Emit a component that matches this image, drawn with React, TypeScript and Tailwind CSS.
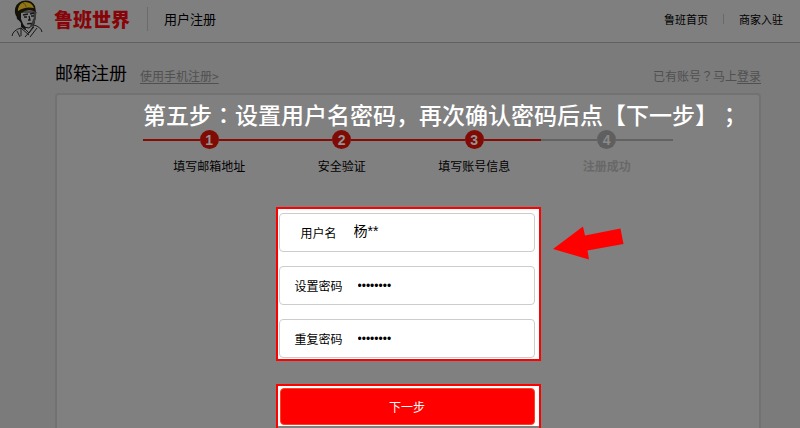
const steps = [
  { number: 1, label: "填写邮箱地址", active: true },
  { number: 2, label: "安全验证", active: true },
  { number: 3, label: "填写账号信息", active: true },
  { number: 4, label: "注册成功", active: false },
];

const fields = [
  { id: "username", label: "用户名", type: "text", value: "杨**" },
  { id: "password", label: "设置密码", type: "password", value: "12345678" },
  { id: "confirm", label: "重复密码", type: "password", value: "12345678" },
];

function Mascot() {
  return (
    <svg viewBox="0 0 32 38" className="h-[38px] w-8" aria-hidden="true">
      {/* Face and neck */}
      <path d="M8 12 L9 21 L13 27 L18 28 L23 24 L25 12 Z" fill="#7d7d7d" stroke="#151515" strokeWidth="1" />
      <path d="M5 13 L10 13 L10 19 L12 24 L15 28 L14 30 L10 27 L10 22 L6 19 Z" fill="#111" />
      <path d="M22 12 L25 12 L25 18 L23 24 L18 28 L21 22 L23 17 Z" fill="#3a3a3a" />
      <path d="M12 15 l5 -1 M19 14 l4 -1 M13 17 h3 M20 16 h3 M18 16 l1 4 h-2 M16 24 q3 -1 5 0" fill="none" stroke="#151515" strokeWidth="1.3" />
      {/* Helmet */}
      <path d="M4 13 Q3 4 11 1 Q20 -1 24 6 L25 12 Q17 8 10 13 L9 17 L5 16 Z" fill="#151208" />
      <path d="M7 9 Q8 3 14 2 Q21 2 23 8 Q14 6 7 11 Z" fill="#8f7616" />
      <path d="M12 3 Q15 4 15 7" fill="none" stroke="#5e4d0c" strokeWidth="1" />
      {/* Collar */}
      <path d="M1 36 Q2 30 10 28 L18 35 M10 28 L10 36 M12 27 L18 33 L23 25 Q30 27 31 32 M23 27 L14 37 M26 28 L19 37 M6 31 L9 37" fill="none" stroke="#191919" strokeWidth="1" />
    </svg>
  );
}

function Header() {
  return (
    <header className="flex h-[43px] shrink-0 items-center justify-between border-b border-[#616161] bg-[#7f7f7f] pr-[17px] pb-1 pl-[11px]">
      <div className="flex items-center">
        <Mascot />
        <h1 className="ml-[11px] text-[19px] leading-6 font-black text-[#870409]">鲁班世界</h1>
        <span className="mr-4 ml-[17px] h-6 w-px bg-[#6b6b6b]" />
        <span className="text-[13px] leading-5">用户注册</span>
      </div>
      <nav className="flex items-center text-[11px] leading-5">
        <a href="#">鲁班首页</a>
        <span className="mx-[15px] h-[10px] w-px bg-[#696969]" />
        <a href="#">商家入驻</a>
      </nav>
    </header>
  );
}

// Full-width mark set in the middle of its square
function Mark({ children }: { children: string }) {
  return <span className="font-['Noto_Sans_CJK_TC',sans-serif]">{children}</span>;
}

function Steps() {
  return (
    <ol className="mx-auto mt-[2px] grid max-w-[530px] grid-cols-4">
      {steps.map((step) => (
        <li key={step.number} className="flex flex-col items-center">
          <div className="flex w-full items-center">
            <span className={step.active ? "h-[2px] flex-1 bg-[#870a04]" : "h-[2px] flex-1 bg-[#626262]"} />
            <span
              className={
                step.active
                  ? "flex size-[19px] items-center justify-center rounded-full bg-[#800a04] font-['Liberation_Sans'] text-sm leading-none font-bold text-[#949494]"
                  : "flex size-[19px] items-center justify-center rounded-full bg-[#5f5f5f] font-['Liberation_Sans'] text-sm leading-none font-bold text-[#8a8a8a]"
              }
            >
              {step.number}
            </span>
            <span className={step.active ? "h-[2px] flex-1 bg-[#870a04]" : "h-[2px] flex-1 bg-[#626262]"} />
          </div>
          <span className={step.active ? "mt-[7px] text-xs leading-5" : "mt-[7px] text-xs leading-5 font-bold text-[#686868]"}>
            {step.label}
          </span>
        </li>
      ))}
    </ol>
  );
}

function Arrow() {
  return (
    <svg viewBox="0 0 72 36" className="absolute top-4 left-full ml-[14px] h-9 w-[72px]" aria-hidden="true">
      <path d="M0 24 L30 1.5 L32 10.5 L67.5 3.5 L70.5 19 L34.5 25.5 L36 34.5 Z" fill="#ff0000" />
    </svg>
  );
}

export default function App() {
  return (
    <div className="flex h-screen flex-col overflow-hidden bg-[#7b7b7b] font-['Noto_Sans_CJK_SC',sans-serif] text-black [text-spacing-trim:space-all]">
      <Header />
      <main className="flex flex-1 flex-col pr-[39px] pl-[55px]">
        <div className="flex items-end justify-between pt-[15px] pb-[7px]">
          <div className="flex items-end gap-[13px]">
            <h2 className="text-lg leading-7">邮箱注册</h2>
            <a href="#" className="text-xs leading-5 text-[#505050] underline underline-offset-2">
              使用手机注册&gt;
            </a>
          </div>
          <p className="text-xs leading-5 text-[#505050]">
            已有账号<Mark>？</Mark>马上
            <a href="#" className="underline underline-offset-2">
              登录
            </a>
          </p>
        </div>

        <section className="flex-1 rounded-t border-2 border-b-0 border-[#727272] bg-[#808080] pt-[5px]">
          <p className="mx-auto w-[530px] text-[23px] leading-7 font-medium whitespace-nowrap text-white">
            第五步<Mark>：</Mark>设置用户名密码，再次确认密码后点【下一步】<Mark>；</Mark>
          </p>
          <Steps />
          <form className="mx-auto mt-[31px] w-[265px]" onSubmit={(e) => e.preventDefault()}>
            <div className="relative flex flex-col gap-[14px] border-2 border-[#ff0000] bg-white pt-1 pr-1 pb-px pl-px">
              {fields.map((field) => (
                <div key={field.id} className="flex h-[39px] items-center rounded border border-[#cccccc]">
                  <label htmlFor={field.id} className="w-[74px] shrink-0 pl-1 text-center text-xs">
                    {field.label}
                  </label>
                  <input
                    id={field.id}
                    type={field.type}
                    defaultValue={field.value}
                    className={
                      field.type === "password"
                        ? "w-full min-w-0 bg-transparent pl-1 font-['Liberation_Sans'] text-xs outline-none"
                        : "w-full min-w-0 bg-transparent pb-1 font-['Liberation_Sans','Noto_Sans_CJK_SC',sans-serif] text-sm leading-5 outline-none"
                    }
                  />
                </div>
              ))}
              <Arrow />
            </div>
            <div className="mt-[23px] border-2 border-b-0 border-[#ff0000] pb-1">
              <div className="bg-white pt-[2px] pr-1 pb-px pl-[2px]">
                <button type="submit" className="block h-[37px] w-full rounded border border-[#ff4020] bg-[#ff0000] text-xs text-white">
                  下一步
                </button>
              </div>
            </div>
          </form>
        </section>
      </main>
    </div>
  );
}
